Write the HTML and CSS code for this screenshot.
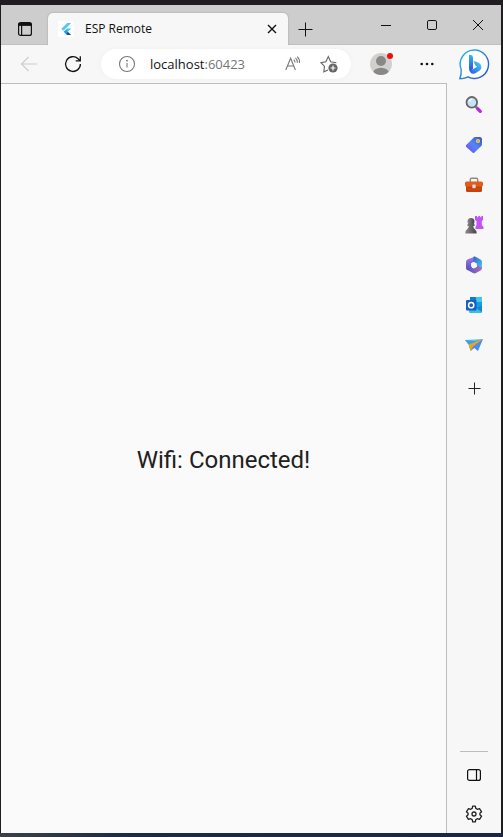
FILE: index.html
```html
<!DOCTYPE html>
<html lang="en">
<head>
<meta charset="utf-8">
<title>ESP Remote</title>
<link rel="stylesheet" href="styles.css">
</head>
<body>
<div class="window">
  <header class="titlebar">
    <div class="tabs">
      <button class="tab-actions" aria-label="Tab actions">
        <svg width="16" height="16" viewBox="0 0 16 16" fill="none" stroke="#111" stroke-width="1.2"><rect x="1.6" y="1.6" width="12.8" height="12.8" rx="2"/><path d="M1.6 3.4h12.8" stroke-width="3"/><path d="M4.6 4v10"/></svg>
      </button>
      <div class="tab">
        <span class="favicon"><svg width="16" height="16" viewBox="0 0 16 16"><path fill="#54c5f8" d="M9.2 2h4L5.4 9.8l-2-2z"/><path fill="#45bdf5" d="M9.2 7.4h4L9.8 10.8l-2 2-2-2z"/><path fill="#01579b" d="M7.8 12.8l2-2 3.4 3.2h-4z"/><path fill="#2a9df0" d="M5.8 10.8l2-2 2 2-2 2z"/></svg></span>
        <span class="tab-title">ESP Remote</span>
        <button class="tab-close" aria-label="Close tab"><svg width="10" height="10" viewBox="0 0 10 10" stroke="#111" stroke-width="1.4"><path d="M1 1l8 8M9 1l-8 8"/></svg></button>
      </div>
      <button class="new-tab" aria-label="New tab"><svg width="15" height="15" viewBox="0 0 15 15" stroke="#111"><path d="M7.5 .5v14M.5 7.5h14"/></svg></button>
    </div>
    <div class="window-controls">
      <button aria-label="Minimize"><svg width="10" height="11" viewBox="0 0 10 11" stroke="#111"><path d="M0 5.5h10"/></svg></button>
      <button aria-label="Maximize"><svg width="10" height="10" viewBox="0 0 10 10" fill="none" stroke="#111"><rect x=".5" y=".5" width="9" height="9" rx="1.4"/></svg></button>
      <button aria-label="Close"><svg width="10" height="10" viewBox="0 0 10 10" stroke="#111"><path d="M0 0l10 10M10 0L0 10"/></svg></button>
    </div>
  </header>
  <div class="body">
    <div class="content">
      <nav class="toolbar">
        <button class="nav-button" aria-label="Back" disabled><svg width="18" height="16" viewBox="0 0 18 16" fill="none" stroke="#ccc" stroke-width="1.1"><path d="M8.5 1L1.5 8l7 7M1.5 8H17"/></svg></button>
        <button class="nav-button" aria-label="Refresh"><svg width="18" height="18" viewBox="0 0 18 18" fill="none" stroke="#111" stroke-width="1.3"><path d="M16.4 9a7.4 7.4 0 1 1-2.3-5.3L16 5.6M16.3 1.2v4.6h-4.6"/></svg></button>
        <div class="address">
          <button class="address-button" aria-label="Site information"><svg width="18" height="18" viewBox="0 0 18 18" fill="none" stroke="#767676" stroke-width="1.1"><circle cx="9" cy="9" r="7.5"/><path d="M9 8v4.6"/><circle cx="9" cy="5.7" r=".9" fill="#767676" stroke="none"/></svg></button>
          <a class="url" href="#">localhost<span class="port">:60423</span></a>
          <button class="address-button" aria-label="Read aloud"><svg width="18" height="16" viewBox="0 0 18 16" fill="none" stroke="#777" stroke-width="1.1"><path d="M.8 14L5.600 2.200 10.400 14M2.500 10h6.200M8.800 3.600q1.200 1.200 1.200 3M10.500 1.800q2.200 2 1.900 5M12.200.6q2.800 2.600 2.200 6.200"/></svg></button>
          <button class="address-button favorite" aria-label="Add to favorites"><svg width="18" height="18" viewBox="0 0 18 18" fill="none" stroke="#666" stroke-width="1.1"><path d="M8 15l-4.2 1.8.7-5.3L1 7.700l4.900-.9L8.300 1.500l2.300 5.300 5.800.9"/><circle cx="13" cy="13" r="4.600" fill="#666" stroke="none"/><path stroke="#fff" d="M13 10.600v4.800M10.600 13h4.800"/></svg></button>
        </div>
        <button class="profile" aria-label="Profile"><svg width="24" height="26" viewBox="0 0 24 26"><defs><clipPath id="face"><circle cx="11" cy="14" r="11"/></clipPath></defs><circle cx="11" cy="14" r="11" fill="#d2d0ce"/><g clip-path="url(#face)" fill="#8a8886"><circle cx="11" cy="11" r="5"/><ellipse cx="11" cy="23" rx="8" ry="5.3"/></g><circle cx="20" cy="6" r="3" fill="#e81010"/></svg></button>
        <button class="menu" aria-label="Settings and more"><svg width="14" height="4" viewBox="0 0 14 4" fill="#111"><circle cx="1.7" cy="2" r="1.3"/><circle cx="7" cy="2" r="1.3"/><circle cx="12.3" cy="2" r="1.3"/></svg></button>
      </nav>
      <main class="page"><p class="status">Wifi: Connected!</p></main>
    </div>
    <aside class="sidebar">
      <button aria-label="Bing"><svg width="34" height="34" viewBox="0 0 34 34"><defs><linearGradient id="ring" x1="0" y1="0" x2="1" y2="1"><stop stop-color="#25c1ea"/><stop offset="1" stop-color="#3148d6"/></linearGradient><linearGradient id="stem" x1="0" y1="0" x2="0" y2="1"><stop stop-color="#35b8f0"/><stop offset="1" stop-color="#2748dd"/></linearGradient><linearGradient id="bowl" x1="0" y1="1" x2="1" y2="0"><stop stop-color="#2657e8"/><stop offset="1" stop-color="#4bd5f3"/></linearGradient></defs><path d="M17.400 3A14.200 14.200 0 1 1 11 30Q6.500 32 2.800 31.600 4.600 28 4.200 22.500A14.200 14.200 0 0 1 17.400 3z" fill="#8090b0" opacity=".3"/><path d="M17.400 2A14.200 14.200 0 1 1 11 28.900Q6.500 31 2.800 30.600 4.500 27 4.200 21.500A14.200 14.200 0 0 1 17.400 2z" fill="#fff" stroke="url(#ring)" stroke-width="1.400"/><path d="M12 6.800q4-.2 4 3.200v10.500l-2 3.400q-2-1-2-4z" fill="url(#stem)"/><path d="M12.400 21.500q1.600 1.200 4-.4l3.600-2.400-1.600-1.300-2-4.400q8 1.400 8 6.400 0 2-2 3.400l-4.500 2.600q-4.500 1.800-5.500-3.900z" fill="url(#bowl)"/></svg></button>
      <button aria-label="Search"><svg width="18" height="18" viewBox="0 0 18 18"><path d="M12.300 12.300l3 3" stroke="#c61bf2" stroke-width="3.200" stroke-linecap="round"/><path d="M10 10l2 2" stroke="#777" stroke-width="2"/><circle cx="6.800" cy="6.300" r="5.300" fill="#c7e3fa" stroke="#666" stroke-width="1.800"/><path d="M4 5.500a3 3 0 0 1 3-2" fill="none" stroke="#eff8ff" stroke-width="1.300"/></svg></button>
      <button aria-label="Shopping"><svg width="18" height="18" viewBox="0 0 18 18"><defs><linearGradient id="tag" x1="1" y1="0" x2="0" y2="1"><stop stop-color="#3155cf"/><stop offset=".5" stop-color="#5486f6"/><stop offset="1" stop-color="#7b45f0"/></linearGradient></defs><path d="M10 1h5.400L17 2.500v5.800q0 .9-.7 1.600l-6.800 6.600q-1 1-2 0L1.200 11q-1-1 0-2l7.300-7.300Q9.200 1 10 1z" fill="url(#tag)"/><circle cx="13" cy="5" r="2.100" fill="#ffd14e"/><circle cx="13" cy="5" r=".9" fill="#c59b35"/></svg></button>
      <button aria-label="Tools"><svg width="20" height="18" viewBox="0 0 20 18"><path d="M6.300 6V3.600q0-1.300 1.300-1.300h4.800q1.300 0 1.300 1.300V6" fill="none" stroke="#8a8a8a" stroke-width="1.400"/><path d="M2 9h16v5.500q0 1.500-1.500 1.500h-13Q2 16 2 14.500z" fill="#c4420f"/><path d="M2.600 5.500h14.800q1.600 0 1.600 1.500v2q0 1.500-1.500 1.500H2.500Q1 10.500 1 9V7q0-1.500 1.600-1.500z" fill="#e45b1c"/><rect x="8.300" y="8.500" width="3.400" height="3.800" rx="1" fill="#ddd"/><path d="M3 13h14" stroke="#d64e13"/></svg></button>
      <button aria-label="Games"><svg width="20" height="20" viewBox="0 0 20 20"><defs><linearGradient id="pawn"><stop stop-color="#8b8b8b"/><stop offset="1" stop-color="#454545"/></linearGradient></defs><path d="M11 1h2v1.300h1.300V1h1.800v1.300h1.300V1h1.600v4l-1.200 1v4l1.700 2v2h-8v-2l1-2V6L11 5z" fill="#c451fa"/><circle cx="7" cy="6.500" r="3.500" fill="url(#pawn)"/><path d="M3.500 9h7v2H9.300q0 3 2 3.800 1.400.7 1.400 3.700H1.200q0-3 1.500-3.700 2-.8 2-3.800H3.500z" fill="url(#pawn)"/></svg></button>
      <button aria-label="Microsoft 365"><svg width="18" height="18" viewBox="0 0 18 18"><defs><linearGradient id="violet" x1="0" y1="0" x2="0" y2="1"><stop stop-color="#ad79ed"/><stop offset="1" stop-color="#4953b9"/></linearGradient><linearGradient id="azure" x1="0" y1="0" x2="1" y2="1"><stop stop-color="#395bc8"/><stop offset="1" stop-color="#4bc9ee"/></linearGradient><linearGradient id="plum"><stop stop-color="#5255c8"/><stop offset="1" stop-color="#b36ab8"/></linearGradient></defs><path d="M10 .5L3 3.200Q1 4 1 6v6q0 1.500 1.300 2.200L7 12 6 7.500 9 5.500z" fill="url(#violet)"/><path d="M17 8v4q0 1.700-1.500 2.500L11 17q-1.500.8-3 0l-6-3.300 4-2.200 3 1 3-1.800V7z" fill="url(#plum)"/><path d="M8.500.8Q9.500.2 11 1l4.500 2.500Q17 4.300 17 6v5.500l-5-2L8 5.300z" fill="url(#azure)"/><path d="M9 5.900l2.800 1.600v3L9 12.100l-2.800-1.600v-3z" fill="#f7f7fb"/></svg></button>
      <button aria-label="Outlook"><svg width="18" height="18" viewBox="0 0 18 18"><path d="M5 1h11q1 0 1 1v13q0 2-2 2H5z" fill="#1a9be3"/><path d="M5 1h6v5H5z" fill="#1678c7"/><path d="M11 1h5q1 0 1 1v4h-6z" fill="#42c5f1"/><path d="M4 9l7 3 6-3v6.500q0 1.500-1.500 1.500h-10Q4 17 4 15.500z" fill="#36bde9"/><path d="M17 9v7l-6-4z" fill="#1487ca"/><rect x="1" y="4" width="10.500" height="10.500" rx="1" fill="#1460bd"/><circle cx="6.200" cy="9.200" r="2.600" fill="none" stroke="#fff" stroke-width="1.500"/></svg></button>
      <button aria-label="Drop"><svg width="20" height="18" viewBox="0 0 20 18"><path d="M1 4l18-1-7 3.500-7.500 2z" fill="#65c4f5"/><path d="M19 3l-5 12-3.700-3L6.500 15 5 9z" fill="#4a8bf0"/><path d="M1 4l4 5 14-6-8 2z" fill="#3aa2e4"/><path d="M4.500 8.500L19 3 9 10.500 6.500 15z" fill="#e9a420"/></svg></button>
      <button class="customize" aria-label="Customize sidebar"><svg width="13" height="13" viewBox="0 0 13 13" stroke="#222"><path d="M6.500.500v12M.500 6.500h12"/></svg></button>
      <div class="sidebar-footer">
        <hr>
        <button aria-label="Hide sidebar"><svg width="14" height="12" viewBox="0 0 14 12" fill="none" stroke="#111" stroke-width="1.200"><rect x=".600" y=".600" width="12.800" height="10.800" rx="2"/><path d="M9.500.500v11"/></svg></button>
        <button class="settings" aria-label="Sidebar settings"><svg width="18" height="18" viewBox="0 0 18 18" fill="none" stroke="#222" stroke-width="1.300" stroke-linejoin="round"><path d="M7.700 1.200h2.600l.5 2.200 1.500.9 2.200-.7 2.100 3.200-1.700 1.500v1.400l1.700 1.500-2.100 3.200-2.200-.7-1.500.9-.5 2.200H7.700l-.5-2.200-1.500-.9-2.200.7-2.100-3.200 1.700-1.500V8.300L1.400 6.800l2.100-3.200 2.200.7 1.500-.9z"/><circle cx="9" cy="9" r="2"/></svg></button>
      </div>
    </aside>
  </div>
</div>
</body>
</html>
```
FILE: styles.css
```css
* { box-sizing: border-box; }

body {
  margin: 0;
  min-height: 100vh;
  display: flex;
  padding: 5px 2px 4px 1px;
  background: linear-gradient(to right, #3d4145, #1a2a47 25%, #1a2644) bottom / 100% 4px no-repeat, #1f1d1f;
  font-family: "Segoe UI", "Open Sans", "Noto Sans", sans-serif;
  color: #111;
}

button {
  display: flex;
  align-items: center;
  justify-content: center;
  flex: none;
  margin: 0;
  padding: 0;
  border: 0;
  background: none;
}

svg { display: block; flex: none; }

.window {
  flex: 1;
  min-width: 0;
  display: flex;
  flex-direction: column;
  background: #f7f7f7;
}

.titlebar {
  display: flex;
  justify-content: space-between;
  height: 40px;
  background: #cdcdcd;
  box-shadow: inset 0 -1px #c0c0c0;
}

.tabs {
  display: flex;
  flex: 1;
  min-width: 0;
  padding-top: 8px;
}

.tab-actions { width: 47px; }

.tab {
  display: flex;
  align-items: center;
  flex: 0 1 240px;
  padding: 0 10px;
  border-radius: 5px 5px 0 0;
  background: #f7f7f7;
  box-shadow: 0 0 2px #999;
  clip-path: inset(-3px -3px 0);
}

.favicon { margin-right: 11px; background: #fff; }

.tab-title {
  flex: 1;
  font-size: 12px;
  line-height: 16px;
  white-space: nowrap;
}

.tab-close { width: 12px; height: 20px; }
.new-tab { width: 34px; }
.window-controls { display: flex; }
.window-controls button { width: 46px; }

.body { flex: 1; display: flex; min-height: 0; }

.content {
  flex: 1;
  min-width: 0;
  display: flex;
  flex-direction: column;
}

.toolbar {
  display: flex;
  align-items: center;
  height: 38px;
  padding-left: 6px;
}

.nav-button { width: 44px; height: 30px; }

.address {
  flex: 1;
  min-width: 0;
  display: flex;
  align-items: center;
  height: 30px;
  margin-left: 6px;
  padding: 0 13px 0 17px;
  border-radius: 15px;
  background: #fff;
  box-shadow: 0 0 4px #eee;
}

.url {
  flex: 1;
  margin-left: 14px;
  color: #111;
  font-size: 13px;
  line-height: 20px;
  text-decoration: none;
  white-space: nowrap;
}

.port { color: #767676; }
.favorite { margin-left: 17px; }
.profile { width: 62px; padding-bottom: 2px; }
.menu { width: 28px; margin-right: 6px; }

.page {
  flex: 1;
  display: flex;
  align-items: center;
  justify-content: center;
  padding-top: 2px;
  border-top: 1px solid #bdbdbd;
  border-right: 1px solid #bdbdbd;
  background: #fafafa;
}

.status {
  margin: 0;
  color: #212121;
  font-family: Roboto, sans-serif;
  font-size: 24px;
  line-height: 32px;
}

.sidebar {
  flex: 0 0 54px;
  display: flex;
  flex-direction: column;
}

.sidebar button { width: 100%; height: 40px; }
.sidebar .customize { margin-top: 3px; }
.sidebar .settings { height: 38px; }
.sidebar-footer { margin-top: auto; }

.sidebar-footer hr {
  width: 28px;
  margin: 0 auto 3px;
  border: 0;
  border-top: 1px solid #bdbdbd;
}
```
